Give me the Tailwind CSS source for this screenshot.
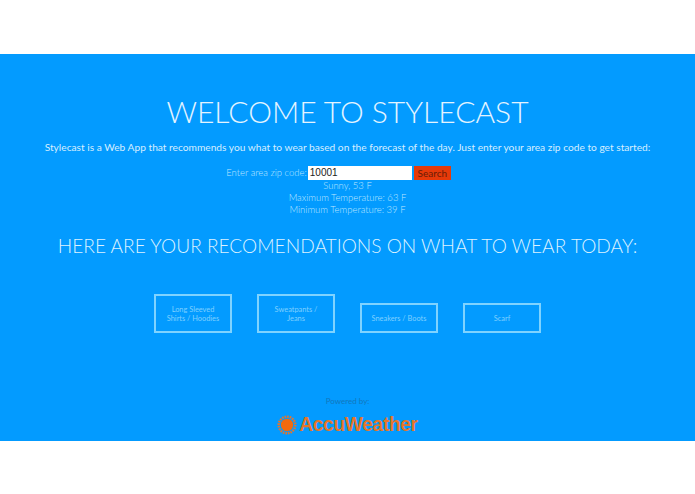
<!DOCTYPE html>
<html lang="en">
<head>
    <meta charset="UTF-8">
    <title>Stylecast</title>
    <script src="https://cdn.jsdelivr.net/npm/@tailwindcss/browser@4"></script>
</head>
<body class="bg-white font-['Lato',sans-serif]">
    <div class="pt-[54px] pb-[53px]">
        <div class="h-[387px] bg-[#039bff] flex flex-col items-center text-center">
            <h1 class="mt-[39px] text-[30px] leading-[36px] font-light text-[#e4f4ff]">WELCOME TO STYLECAST</h1>
            <p class="mt-[11px] text-[10.2px] leading-[14px] text-[#d5eeff] whitespace-nowrap">Stylecast is a Web App that recommends you what to wear based on the forecast of the day. Just enter your area zip code to get started:</p>
            <div class="mt-[12px] mr-[18px] flex items-center text-[9.5px] leading-[14px] text-[#bfe6ff] font-light">
                <span class="mr-[1px]">Enter area zip code:</span>
                <input type="text" value="10001" class="w-[104px] h-[14px] bg-white px-[2px] text-[10px] text-[#222] font-['Liberation_Sans',sans-serif]">
                <button class="ml-[2px] w-[37px] h-[14px] bg-[#e63a0a] text-[#6a1c06] text-[10px] leading-[14px] font-normal">Search</button>
            </div>
            <div class="text-[9.5px] leading-[12px] text-[#bfe6ff] font-light">
                <p>Sunny, 53 F</p>
                <p>Maximum Temperature: 63 F</p>
                <p>Minimum Temperature: 39 F</p>
            </div>
            <h2 class="mt-[17px] text-[19.15px] leading-[26px] font-light text-[#dcf2ff]">HERE ARE YOUR RECOMENDATIONS ON WHAT TO WEAR TODAY:</h2>
            <div class="mt-[35px] flex items-end gap-[25px] text-[7.4px] leading-[9px] text-[#7fd0ff]">
                <div class="w-[78px] h-[39px] border-2 border-[#7fd3ff] flex items-center justify-center">Long Sleeved<br>Shirts / Hoodies</div>
                <div class="w-[78px] h-[39px] border-2 border-[#7fd3ff] flex items-center justify-center">Sweatpants /<br>Jeans</div>
                <div class="w-[78px] h-[30px] border-2 border-[#7fd3ff] flex items-center justify-center">Sneakers / Boots</div>
                <div class="w-[78px] h-[30px] border-2 border-[#7fd3ff] flex items-center justify-center">Scarf</div>
            </div>
            <p class="mt-[63px] text-[8px] leading-[10px] text-[#1277bd]">Powered by:</p>
            <div class="mt-[8px] flex items-center gap-[2px]">
                <svg width="20" height="20" viewBox="0 0 20 20">
                    <circle cx="10" cy="10" r="6.2" fill="#f26a0f"/>
                    <circle cx="10" cy="10" r="8.3" fill="none" stroke="#e8742a" stroke-width="2.4" stroke-dasharray="1.6 1"/>
                </svg>
                <span class="text-[19.3px] leading-[22px] font-bold text-[#e5762a] font-['Liberation_Sans',sans-serif] tracking-[-0.4px]">AccuWeather</span>
            </div>
        </div>
    </div>
</body>
</html>
